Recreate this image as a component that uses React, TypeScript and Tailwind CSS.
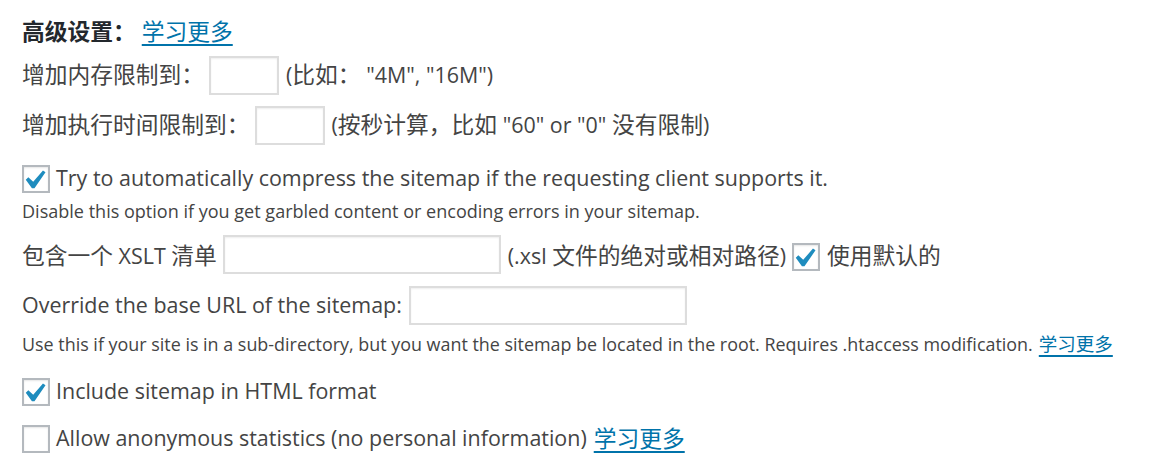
import React from "react";

const C = ({ children }: { children: React.ReactNode }) => (
  <span className="text-[22.75px]">{children}</span>
);

const Check = ({ checked }: { checked: boolean }) => (
  <span className="flex h-[28px] w-[28px] shrink-0 items-center justify-center border-2 border-[#b4b9be] bg-white shadow-[inset_0_1px_2px_rgba(0,0,0,0.1)]">
    {checked && (
      <svg viewBox="5.4 4.6 11 10" width="21" height="19" className="ml-[-1px] mt-[1px]">
        <path d="M14.83 4.89l1.34.94-5.81 8.38H9.02L5.78 9.67l1.34-1.25 2.57 2.4z" fill="#1e8cbe" />
      </svg>
    )}
  </span>
);

const Input = ({ w }: { w: string }) => (
  <span className={`block h-[39px] ${w} border-2 border-[#dddddd] bg-white shadow-[inset_0_1px_2px_rgba(0,0,0,0.07)]`} />
);

const Link = ({ children, cls = "" }: { children: React.ReactNode; cls?: string }) => (
  <a className={`text-[#0073aa] underline decoration-[1.5px] underline-offset-[4px] ${cls}`}>{children}</a>
);

export default function App() {
  return (
    <div
      className="min-h-[472px] w-[1151px] bg-white pl-[22px] pt-[17px] text-[#444444]"
      style={{ fontFamily: '"Open Sans", "Noto Sans CJK SC", sans-serif' }}
    >
      <div className="flex h-[30px] items-center text-[21.45px]">
        <span className="font-bold text-[#23282d] text-[22.75px]">高级设置：</span>
        <Link cls="ml-[6px] text-[22.75px]">学习更多</Link>
      </div>

      <div className="mt-[9px] flex h-[39px] items-center text-[21.45px]">
        <C>增加内存限制到：</C>
        <span className="ml-[5px]">
          <Input w="w-[70px]" />
        </span>
        <span className="ml-[7px]">
          (<C>比如：</C> "4M", "16M")
        </span>
      </div>

      <div className="mt-[11px] flex h-[39px] items-center text-[21.45px]">
        <C>增加执行时间限制到：</C>
        <span className="ml-[5px]">
          <Input w="w-[70px]" />
        </span>
        <span className="ml-[7px]">
          (<C>按秒计算，比如</C> "60" or "0" <C>没有限制</C>)
        </span>
      </div>

      <div className="mt-[20px] flex h-[28px] items-center text-[21.45px]">
        <Check checked />
        <span className="ml-[6px] mt-[-2px]">Try to automatically compress the sitemap if the requesting client supports it.</span>
      </div>

      <div className="mt-[7px] flex h-[24px] items-center text-[18.05px]">
        Disable this option if you get garbled content or encoding errors in your sitemap.
      </div>

      <div className="mt-[13px] flex h-[39px] items-center text-[21.45px]">
        <C>包含一个</C>
        <span>&nbsp;XSLT&nbsp;</span>
        <C>清单</C>
        <span className="ml-[6px] mt-[-4px]">
          <Input w="w-[278px]" />
        </span>
        <span className="ml-[7px]">
          (.xsl <C>文件的绝对或相对路径</C>)
        </span>
        <span className="ml-[6px]">
          <Check checked />
        </span>
        <C>
          <span className="ml-[7px]">使用默认的</span>
        </C>
      </div>

      <div className="mt-[10px] flex h-[39px] items-center text-[21.45px]">
        <span>Override the base URL of the sitemap:</span>
        <span className="ml-[7px]">
          <Input w="w-[278px]" />
        </span>
      </div>

      <div className="mt-[7px] flex h-[24px] items-center text-[17.92px]">
        <span>Use this if your site is in a sub-directory, but you want the sitemap be located in the root. Requires .htaccess modification.</span>
        <Link cls="ml-[6px] text-[18.5px]">学习更多</Link>
      </div>

      <div className="mt-[22px] flex h-[28px] items-center text-[21.45px]">
        <Check checked />
        <span className="ml-[6px] mt-[-2px]">Include sitemap in HTML format</span>
      </div>

      <div className="mt-[19px] flex h-[28px] items-center text-[21.45px]">
        <Check checked={false} />
        <span className="ml-[6px] mt-[-2px]">Allow anonymous statistics (no personal information)</span>
        <Link cls="ml-[7px] text-[22.75px]">学习更多</Link>
      </div>
    </div>
  );
}
